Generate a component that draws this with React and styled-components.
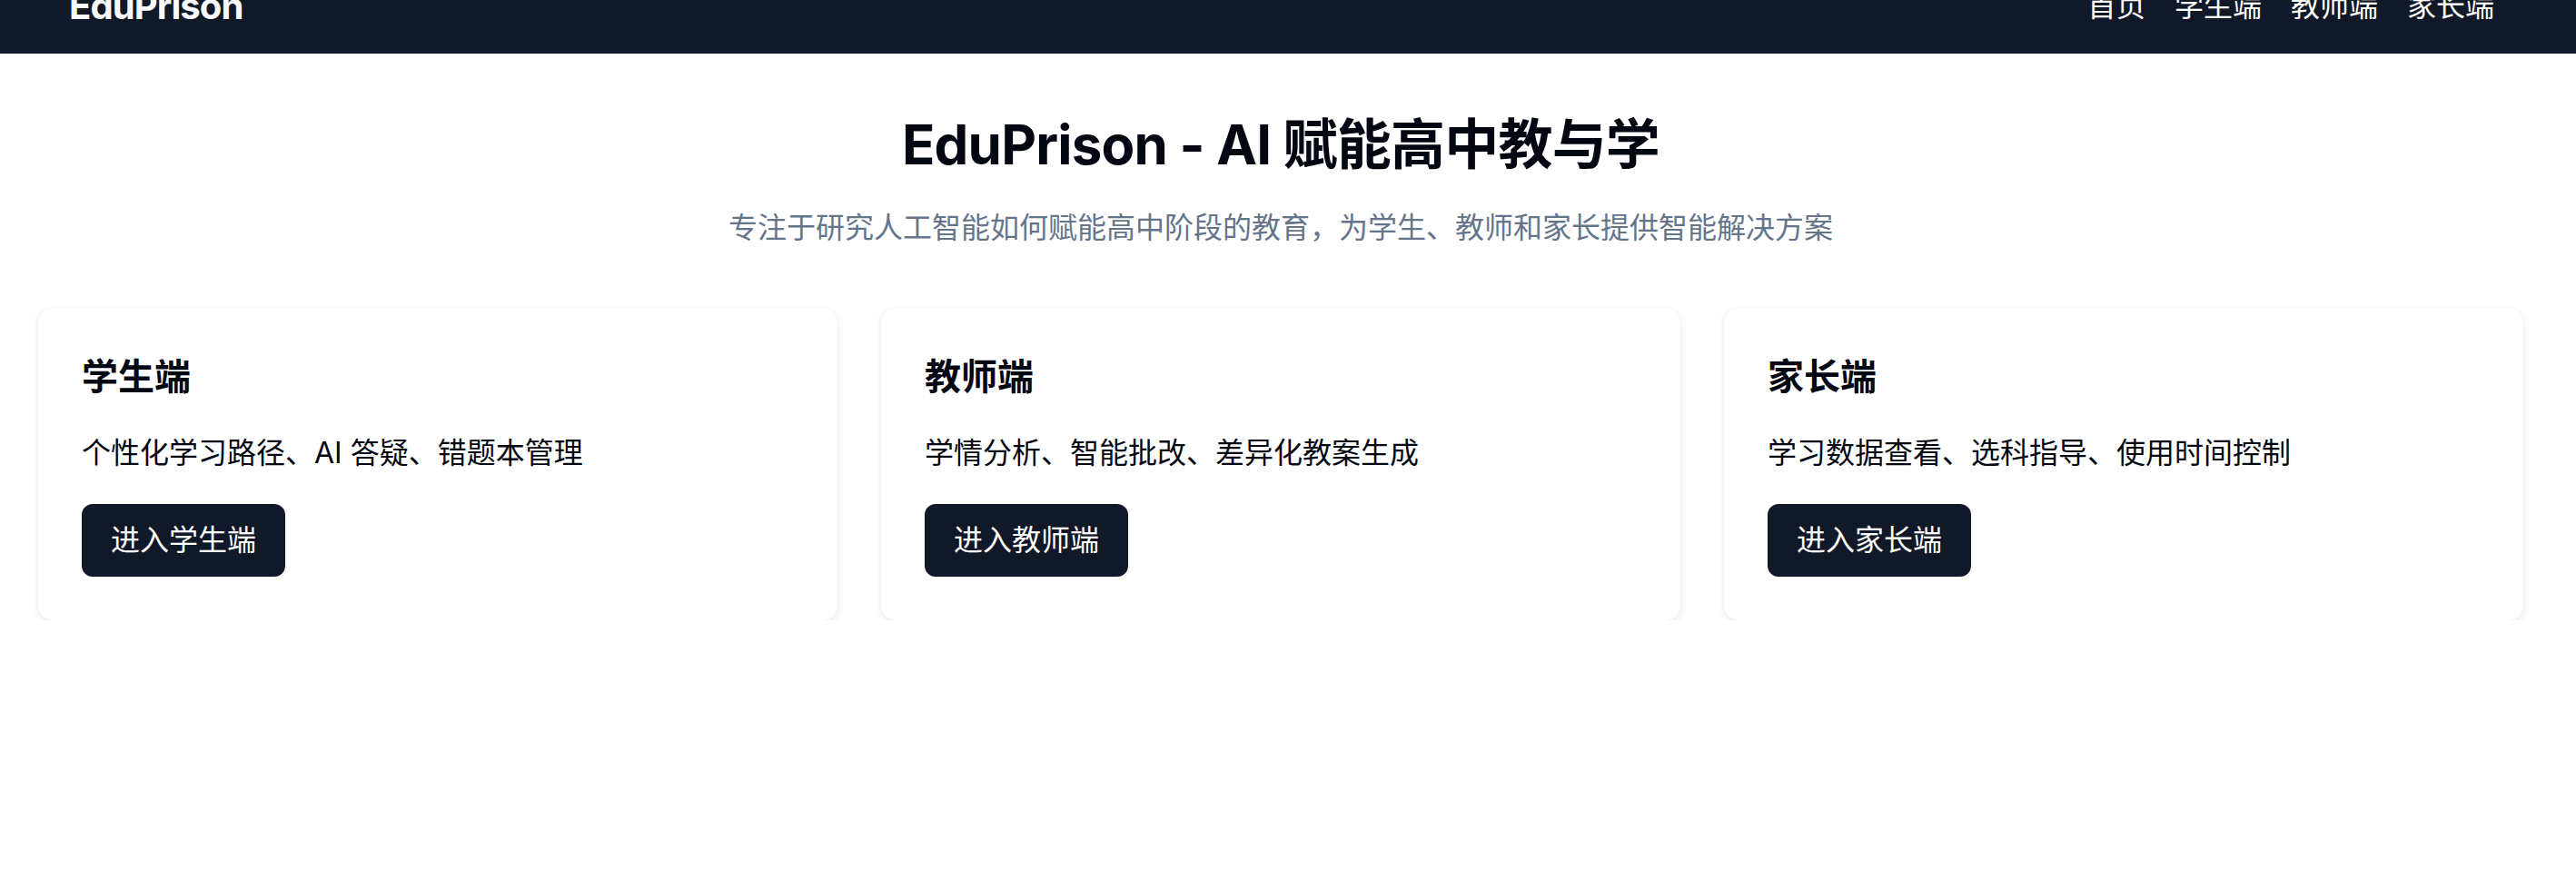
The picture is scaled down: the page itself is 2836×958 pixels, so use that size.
import React from 'react'
import styled, { createGlobalStyle } from 'styled-components'

const GlobalStyle = createGlobalStyle`
  html, body {
    margin: 0;
    padding: 0;
    background: #FFF;
  }
  body {
    font-family: Inter, "Noto Sans CJK SC", "Noto Sans", sans-serif;
    color: #111827;
    overflow: hidden;
  }
`

// the page is scrolled down a little in the screenshot
const Page = styled.div`
  margin-top: -45px;
`

const Nav = styled.nav`
  background: #111827;
  color: #F9FAFB;
`

const NavInner = styled.div`
  display: flex;
  align-items: center;
  justify-content: space-between;
  height: 104px;
  padding: 0 90px 0 76px;
`

const Logo = styled.div`
  font-size: 40px;
  line-height: 56px;
  font-weight: 700;
  letter-spacing: -0.9px;
`

const NavLinks = styled.div`
  display: flex;
  gap: 32px;
`

const NavLink = styled.a`
  font-size: 32px;
  line-height: 48px;
  color: #FFF;
  text-decoration: none;
  cursor: pointer;
`

const Main = styled.main`
  padding: 64px 58px 0 42px;
`

const Hero = styled.header`
  display: flex;
  flex-direction: column;
  align-items: center;
  margin-bottom: 64px;
`

const Title = styled.h1`
  margin: 0 0 32px;
  font-size: 60px;
  line-height: 72px;
  font-weight: 700;
  color: #030712;
  letter-spacing: -0.8px;
`

const Subtitle = styled.p`
  margin: 0;
  font-size: 32px;
  line-height: 48px;
  color: #64748B;
`

const Grid = styled.section`
  display: grid;
  grid-template-columns: repeat(3, 1fr);
  gap: 48px;
`

const Card = styled.div`
  background: #FFF;
  border-radius: 16px;
  padding: 48px;
  box-shadow: 0 3px 8px rgba(15, 23, 42, 0.09), 0 0 2px rgba(15, 23, 42, 0.05);
`

const CardTitle = styled.h2`
  margin: 0 0 32px;
  font-size: 40px;
  line-height: 56px;
  font-weight: 700;
  color: #030712;
`

const CardText = styled.p`
  margin: 0 0 32px;
  font-size: 32px;
  line-height: 48px;
  color: #030712;
`

const EnterButton = styled.button`
  display: inline-block;
  border: none;
  border-radius: 12px;
  padding: 16px 32px;
  background: #111827;
  color: #FFF;
  font-family: inherit;
  font-size: 32px;
  line-height: 48px;
  cursor: pointer;
`

const portals = [
  { name: '学生端', desc: '个性化学习路径、AI 答疑、错题本管理' },
  { name: '教师端', desc: '学情分析、智能批改、差异化教案生成' },
  { name: '家长端', desc: '学习数据查看、选科指导、使用时间控制' },
]

const App = () => (
  <Page>
    <GlobalStyle />
    <Nav>
      <NavInner>
        <Logo>EduPrison</Logo>
        <NavLinks>
          <NavLink>首页</NavLink>
          {portals.map(p => <NavLink key={p.name}>{p.name}</NavLink>)}
        </NavLinks>
      </NavInner>
    </Nav>
    <Main>
      <Hero>
        <Title>EduPrison - AI 赋能高中教与学</Title>
        <Subtitle>专注于研究人工智能如何赋能高中阶段的教育，为学生、教师和家长提供智能解决方案</Subtitle>
      </Hero>
      <Grid>
        {portals.map(p => (
          <Card key={p.name}>
            <CardTitle>{p.name}</CardTitle>
            <CardText>{p.desc}</CardText>
            <EnterButton>进入{p.name}</EnterButton>
          </Card>
        ))}
      </Grid>
    </Main>
  </Page>
)

export default App
